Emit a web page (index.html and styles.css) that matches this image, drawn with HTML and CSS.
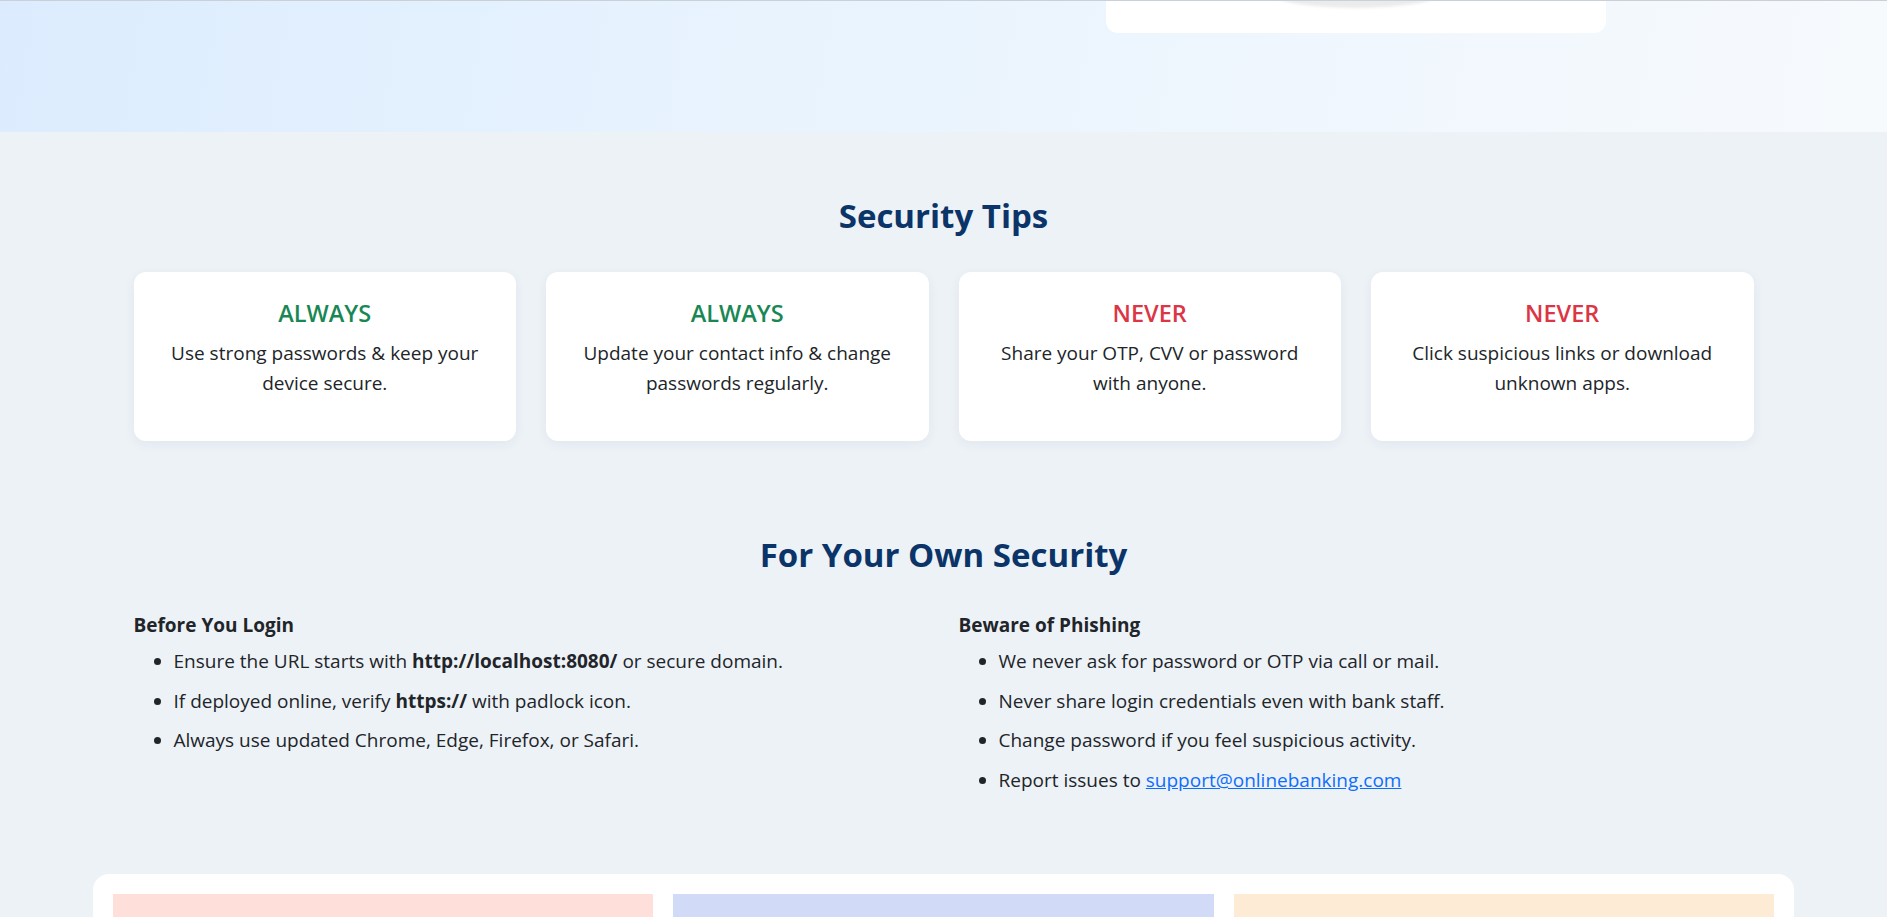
FILE: index.html
```html
<!DOCTYPE html>
<html lang="en">
<head>
<meta charset="utf-8">
<title>Online Banking - Security</title>
<link rel="stylesheet" href="styles.css">
</head>
<body>
<header class="hero">
  <div class="container hero-grid">
    <div class="hero-left"></div>
    <div class="hero-right">
      <div class="hero-card"><span class="hero-img"></span></div>
    </div>
  </div>
</header>

<section class="tips">
  <div class="container">
    <h2 class="section-title">Security Tips</h2>
    <div class="tip-grid">
      <div class="tip-card">
        <h3 class="tip-title always">ALWAYS</h3>
        <p>Use strong passwords &amp; keep your device secure.</p>
      </div>
      <div class="tip-card">
        <h3 class="tip-title always">ALWAYS</h3>
        <p>Update your contact info &amp; change passwords regularly.</p>
      </div>
      <div class="tip-card">
        <h3 class="tip-title never">NEVER</h3>
        <p>Share your OTP, CVV or password with anyone.</p>
      </div>
      <div class="tip-card">
        <h3 class="tip-title never">NEVER</h3>
        <p>Click suspicious links or download unknown apps.</p>
      </div>
    </div>
  </div>
</section>

<section class="own">
  <div class="container">
    <h2 class="section-title">For Your Own Security</h2>
    <div class="two-col">
      <div class="col">
        <h4 class="col-title">Before You Login</h4>
        <ul class="list">
          <li>Ensure the URL starts with <strong>http://localhost:8080/</strong> or secure domain.</li>
          <li>If deployed online, verify <strong>https://</strong> with padlock icon.</li>
          <li>Always use updated Chrome, Edge, Firefox, or Safari.</li>
        </ul>
      </div>
      <div class="col">
        <h4 class="col-title">Beware of Phishing</h4>
        <ul class="list">
          <li>We never ask for password or OTP via call or mail.</li>
          <li>Never share login credentials even with bank staff.</li>
          <li>Change password if you feel suspicious activity.</li>
          <li>Report issues to <a href="mailto:support@onlinebanking.com">support@onlinebanking.com</a></li>
        </ul>
      </div>
    </div>
  </div>
</section>

<section class="features">
  <div class="feature-card">
    <div class="panel panel-pink"></div>
    <div class="panel panel-blue"></div>
    <div class="panel panel-peach"></div>
  </div>
</section>
</body>
</html>
```

FILE: styles.css
```css
* { box-sizing: border-box; }

html, body {
  margin: 0;
  padding: 0;
}

body {
  background: #edf2f7;
  color: #212529;
  font-family: "Open Sans", "Noto Sans", "Liberation Sans", sans-serif;
  font-size: 19px;
}

.container {
  width: 1620px;
  margin: 0 auto;
}

/* hero */
.hero {
  height: 132px;
  border-top: 1px solid #c9d0d8;
  background: linear-gradient(100deg, #dcecfe 0%, #e8f3fe 40%, #f7fafd 100%);
}

.hero-grid {
  display: grid;
  grid-template-columns: 1fr 1fr;
  column-gap: 30px;
}

.hero-right {
  display: flex;
  justify-content: center;
}

.hero-card {
  position: relative;
  width: 500px;
  height: 32px;
  background: #ffffff;
  border-radius: 0 0 12px 12px;
  overflow: hidden;
}

.hero-img {
  position: absolute;
  left: 165px;
  top: -23px;
  width: 170px;
  height: 30px;
  border-radius: 50%;
  background: #ebebeb;
  filter: blur(1.5px);
}

/* section titles */
.section-title {
  margin: 0;
  text-align: center;
  color: #0b3468;
  font-size: 33px;
  font-weight: 700;
  line-height: 36px;
}

/* tips */
.tips {
  padding-top: 66px;
}

.tips .section-title {
  margin-bottom: 38px;
}

.tip-grid {
  display: grid;
  grid-template-columns: repeat(4, 1fr);
  column-gap: 30px;
}

.tip-card {
  background: #ffffff;
  border-radius: 12px;
  box-shadow: 0 3px 12px rgba(30, 50, 80, 0.06);
  padding: 26px 30px 27px;
  text-align: center;
}

.tip-title {
  margin: 0 0 10px;
  font-size: 23.5px;
  font-weight: 600;
  line-height: 30px;
}

.tip-title.always { color: #198754; }
.tip-title.never { color: #dc3545; }

.tip-card p {
  margin: 0 0 16px;
  line-height: 30px;
}

/* own security */
.own {
  padding-top: 96px;
}

.own .section-title {
  margin-bottom: 41px;
}

.two-col {
  display: grid;
  grid-template-columns: 1fr 1fr;
  column-gap: 30px;
}

.col-title {
  margin: 0 0 12px;
  font-size: 19px;
  font-weight: 700;
  line-height: 22px;
}

.list {
  margin: 0;
  padding-left: 40px;
}

.list li {
  line-height: 27px;
  margin-bottom: 12.7px;
}

.list a {
  color: #0d6efd;
  text-decoration: underline;
}

/* features */
.features {
  padding-top: 67px;
}

.feature-card {
  width: 1701px;
  margin: 0 auto;
  background: #ffffff;
  border-radius: 16px;
  padding: 20px;
  display: grid;
  grid-template-columns: repeat(3, 1fr);
  column-gap: 20px;
}

.panel {
  height: 220px;
}

.panel-pink { background: #ffdfd9; }
.panel-blue { background: #d1dbf7; }
.panel-peach { background: #fdebd5; }
```
